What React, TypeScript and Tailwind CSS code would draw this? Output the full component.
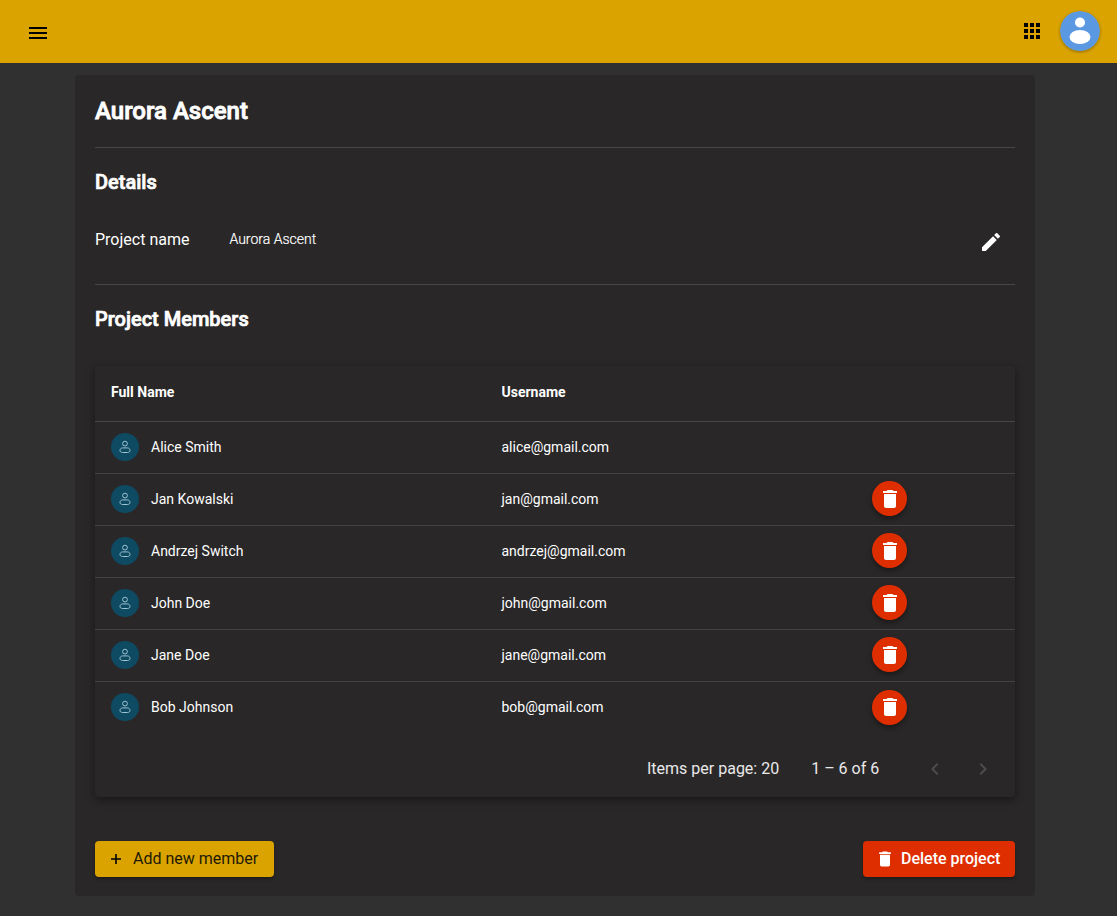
const members = [
  { name: "Alice Smith", email: "alice@gmail.com", owner: true },
  { name: "Jan Kowalski", email: "jan@gmail.com" },
  { name: "Andrzej Switch", email: "andrzej@gmail.com" },
  { name: "John Doe", email: "john@gmail.com" },
  { name: "Jane Doe", email: "jane@gmail.com" },
  { name: "Bob Johnson", email: "bob@gmail.com" },
];

function TrashIcon({ size = 24 }: { size?: number }) {
  return (
    <svg width={size} height={size} viewBox="0 0 24 24" fill="currentColor">
      <path d="M6 19c0 1.1.9 2 2 2h8c1.1 0 2-.9 2-2V7H6v12zM19 4h-3.5l-1-1h-5l-1 1H5v2h14V4z" />
    </svg>
  );
}

function PersonIcon() {
  return (
    <svg width="16" height="16" viewBox="0 0 16 16" fill="none" stroke="#9fc3d1" strokeWidth="1">
      <circle cx="8" cy="4.6" r="2.4" />
      <path d="M5.6 8.9h4.8c1.6 0 2.6 1.2 2.6 2.5 0 1.3-1 2.1-2.6 2.1H5.600c-1.600 0-2.600-.8-2.600-2.100 0-1.300 1-2.500 2.600-2.500z" />
    </svg>
  );
}

function Chevron({ dir }: { dir: "left" | "right" }) {
  return (
    <svg width="24" height="24" viewBox="0 0 24 24" fill="#4d4d4d">
      <path d={dir === "left" ? "M15.41 7.41 14 6l-6 6 6 6 1.41-1.41L10.830 12z" : "M10 6 8.590 7.410 13.170 12l-4.580 4.590L10 18l6-6z"} />
    </svg>
  );
}

function MemberRow({ name, email, owner }: { name: string; email: string; owner?: boolean }) {
  return (
    <div className="flex h-[52px] items-center border-b border-[#444344] pb-[2px] text-sm">
      <div className="flex w-[406.5px] items-center gap-3 pl-4">
        <span className="flex h-7 w-7 items-center justify-center rounded-full bg-[#0f4a63]">
          <PersonIcon />
        </span>
        <span>{name}</span>
      </div>
      <div className="w-[370.5px]">{email}</div>
      {!owner && (
        <button className="flex h-[35px] w-[35px] items-center justify-center rounded-full bg-[#de2e00] shadow-[0_3px_5px_rgba(0,0,0,0.35)]">
          <TrashIcon />
        </button>
      )}
    </div>
  );
}

export default function App() {
  return (
    <div className="flex h-[916px] flex-col overflow-hidden bg-[#303030] font-['Roboto',sans-serif] text-white">
      <header className="flex h-[63px] shrink-0 items-center bg-[#daa300] pr-[17px] pb-px pl-[26px] text-black">
        <svg width="24" height="24" viewBox="0 0 24 24" fill="currentColor" className="mt-1">
          <path d="M3 18h18v-2H3v2zm0-5h18v-2H3v2zm0-7v2h18V6H3z" />
        </svg>
        <div className="ml-auto flex items-center gap-[16px]">
          <svg width="24" height="24" viewBox="0 0 24 24" fill="currentColor">
            <path d="M4 8h4V4H4v4zm6 12h4v-4h-4v4zm-6 0h4v-4H4v4zm0-6h4v-4H4v4zm6 0h4v-4h-4v4zm6-10v4h4V4h-4zm-6 4h4V4h-4v4zm6 6h4v-4h-4v4zm0 6h4v-4h-4v4z" />
          </svg>
          <svg width="40" height="40" viewBox="0 0 40 40" className="rounded-full shadow-[0_1px_3px_rgba(0,0,0,0.35)]">
            <circle cx="20" cy="20" r="20" fill="#5a98e2" />
            <circle cx="20" cy="11.500" r="5" fill="#fff" />
            <ellipse cx="20" cy="26" rx="10.500" ry="7" fill="#fff" />
          </svg>
        </div>
      </header>

      <main className="mt-3 ml-[75px] flex h-[821px] w-[960px] flex-col rounded bg-[#292728] px-5">
        <h1 className="flex h-[72px] shrink-0 items-center text-2xl font-medium [-webkit-text-stroke:0.8px_white]">Aurora Ascent</h1>
        <hr className="border-[#484748]" />
        <h2 className="mt-[23px] text-xl leading-[22px] font-medium [-webkit-text-stroke:0.7px_white]">Details</h2>
        <div className="mt-[30px] flex h-[40px] items-start">
          <span className="w-[134.500px] pt-[5px] text-base">Project name</span>
          <span className="pt-[6px] text-sm font-light [-webkit-text-stroke:0.2px_white]">Aurora Ascent</span>
          <button className="mt-[7px] mr-3 ml-auto">
            <svg width="24" height="24" viewBox="0 0 24 24" fill="currentColor">
              <path d="M3 17.250V21h3.750L17.810 9.940l-3.750-3.750L3 17.250zM20.710 7.040a1 1 0 0 0 0-1.410l-2.340-2.340a1 1 0 0 0-1.410 0l-1.830 1.830 3.750 3.750 1.830-1.830z" />
            </svg>
          </button>
        </div>
        <hr className="mt-[21px] border-[#484748]" />
        <h2 className="mt-[23px] text-xl leading-[22px] font-medium [-webkit-text-stroke:0.7px_white]">Project Members</h2>

        <section className="mt-[36px] h-[431px] rounded-sm bg-[#292728] shadow-[0_3px_8px_rgba(0,0,0,0.4)]">
          <div className="flex h-[56px] items-center border-b border-[#484748] pb-1 text-sm font-bold">
            <div className="w-[406.5px] pl-4">Full Name</div>
            <div>Username</div>
          </div>
          {members.map((m, i) => (
            <div key={m.email} className={i === members.length - 1 ? "[&>div]:border-b-0" : ""}>
              <MemberRow {...m} />
            </div>
          ))}
          <div className="flex h-[70px] items-center text-base text-white/90">
            <span className="ml-[552px]">Items per page: 20</span>
            <span className="ml-8">1 – 6 of 6</span>
            <div className="ml-[44px] flex gap-6">
              <Chevron dir="left" />
              <Chevron dir="right" />
            </div>
          </div>
        </section>

        <div className="mt-[44px] flex items-center justify-between">
          <button className="flex h-9 w-[179px] items-center rounded bg-[#daa300] pl-[13px] text-base text-[#1f1a05] shadow-[0_2px_3px_rgba(0,0,0,0.3)]">
            <svg width="16" height="16" viewBox="0 0 16 16" fill="#000" className="mr-[9px]">
              <path d="M3 7.200h4.200V3h1.600v4.200H13v1.600H8.800V13H7.200V8.800H3z" />
            </svg>
            Add new member
          </button>
          <button className="flex h-9 w-[152px] items-center rounded bg-[#de2e00] pl-[12px] text-base font-medium shadow-[0_2px_3px_rgba(0,0,0,0.3)]">
            <span className="mr-[6px]">
              <TrashIcon size={20} />
            </span>
            Delete project
          </button>
        </div>
      </main>
    </div>
  );
}
